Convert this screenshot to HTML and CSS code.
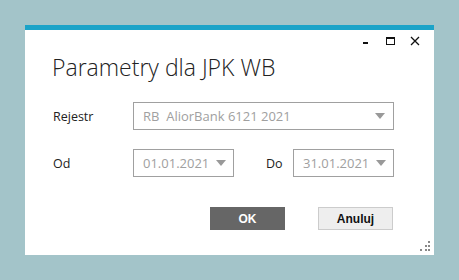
FILE: index.html
```html
<!DOCTYPE html>
<html lang="pl">

<head>
    <meta charset="UTF-8">
    <meta name="viewport" content="width=device-width, initial-scale=1.0">
    <title>Parametry dla JPK WB</title>
    <link rel="stylesheet" href="styles.css">
</head>

<body>
    <div class="window">
        <div class="caption">
            <span class="ctl">
                <svg width="10" height="10" viewBox="0 0 10 10"><rect x="1" y="6" width="5" height="2" fill="#111"/></svg>
            </span>
            <span class="ctl">
                <svg width="10" height="10" viewBox="0 0 10 10"><rect x="0.5" y="1.5" width="8" height="7" fill="none" stroke="#111" stroke-width="1"/><rect x="0" y="1" width="9" height="2" fill="#111"/></svg>
            </span>
            <span class="ctl">
                <svg width="10" height="10" viewBox="0 0 10 10"><path d="M1 1 L9 9 M9 1 L1 9" stroke="#111" stroke-width="1.3"/></svg>
            </span>
        </div>
        <h1>Parametry dla JPK WB</h1>
        <div class="form">
            <div class="row">
                <label class="lbl">Rejestr</label>
                <div class="combo wide">
                    <span>RB&nbsp; AliorBank 6121 2021</span>
                    <i class="arrow"></i>
                </div>
            </div>
            <div class="row">
                <label class="lbl">Od</label>
                <div class="combo date">
                    <span>01.01.2021</span>
                    <i class="arrow"></i>
                </div>
                <label class="lbl short">Do</label>
                <div class="combo date">
                    <span>31.01.2021</span>
                    <i class="arrow"></i>
                </div>
            </div>
        </div>
        <div class="buttons">
            <button class="btn ok">OK</button>
            <button class="btn cancel">Anuluj</button>
        </div>
        <svg class="grip" width="10" height="10" viewBox="0 0 10 10">
            <rect x="8" y="0" width="2" height="2" fill="#888"/>
            <rect x="5" y="4" width="2" height="2" fill="#888"/>
            <rect x="8" y="4" width="2" height="2" fill="#888"/>
            <rect x="0" y="8" width="2" height="2" fill="#888"/>
            <rect x="5" y="8" width="2" height="2" fill="#888"/>
            <rect x="8" y="8" width="2" height="2" fill="#888"/>
        </svg>
    </div>
</body>

</html>
```

FILE: styles.css
```css
body {
    margin: 0;
    padding: 25px;
    background-color: #a3c4c9;
    font-family: "Open Sans", "Noto Sans", sans-serif;
}

.window {
    position: relative;
    width: 409px;
    height: 230px;
    box-sizing: border-box;
    border-top: 5px solid #1ba3c8;
    background-color: #fff;
    padding: 0 40px 0 28px;
}

.caption {
    display: flex;
    justify-content: flex-end;
    gap: 14px;
    height: 20px;
    padding-top: 6px;
    margin-right: -26px;
}

.ctl {
    width: 10px;
    height: 10px;
    display: flex;
}

h1 {
    margin: -5px 0 0 -1px;
    font-size: 23px;
    font-weight: 300;
    color: #222;
    line-height: 32px;
}

.form {
    margin-top: 19px;
    display: flex;
    flex-direction: column;
    gap: 19px;
}

.row {
    display: flex;
    align-items: center;
}

.lbl {
    width: 80px;
    font-size: 12.5px;
    color: #222;
}

.lbl.short {
    width: 27px;
    margin-left: 32px;
}

.combo {
    height: 28px;
    box-sizing: border-box;
    border: 1px solid #a0a0a0;
    display: flex;
    align-items: center;
    justify-content: space-between;
    padding: 0 8px 0 9px;
    font-size: 13px;
    color: #a0a0a0;
}

.combo.wide {
    width: 261px;
}

.combo.date {
    width: 101px;
    padding-right: 7px;
}

.arrow {
    width: 0;
    height: 0;
    border-left: 5px solid transparent;
    border-right: 5px solid transparent;
    border-top: 6px solid #999;
}

.buttons {
    display: flex;
    gap: 33px;
    margin: 30px 0 0 157px;
}

.btn {
    width: 75px;
    height: 23px;
    font-family: "Liberation Sans", Arial, sans-serif;
    font-weight: bold;
    font-size: 12px;
    cursor: pointer;
}

.ok {
    background-color: #666;
    color: #fff;
    border: none;
}

.cancel {
    background-color: #eee;
    color: #111;
    border: 1px solid #ccc;
}

.grip {
    position: absolute;
    right: 4px;
    bottom: 4px;
}
```
